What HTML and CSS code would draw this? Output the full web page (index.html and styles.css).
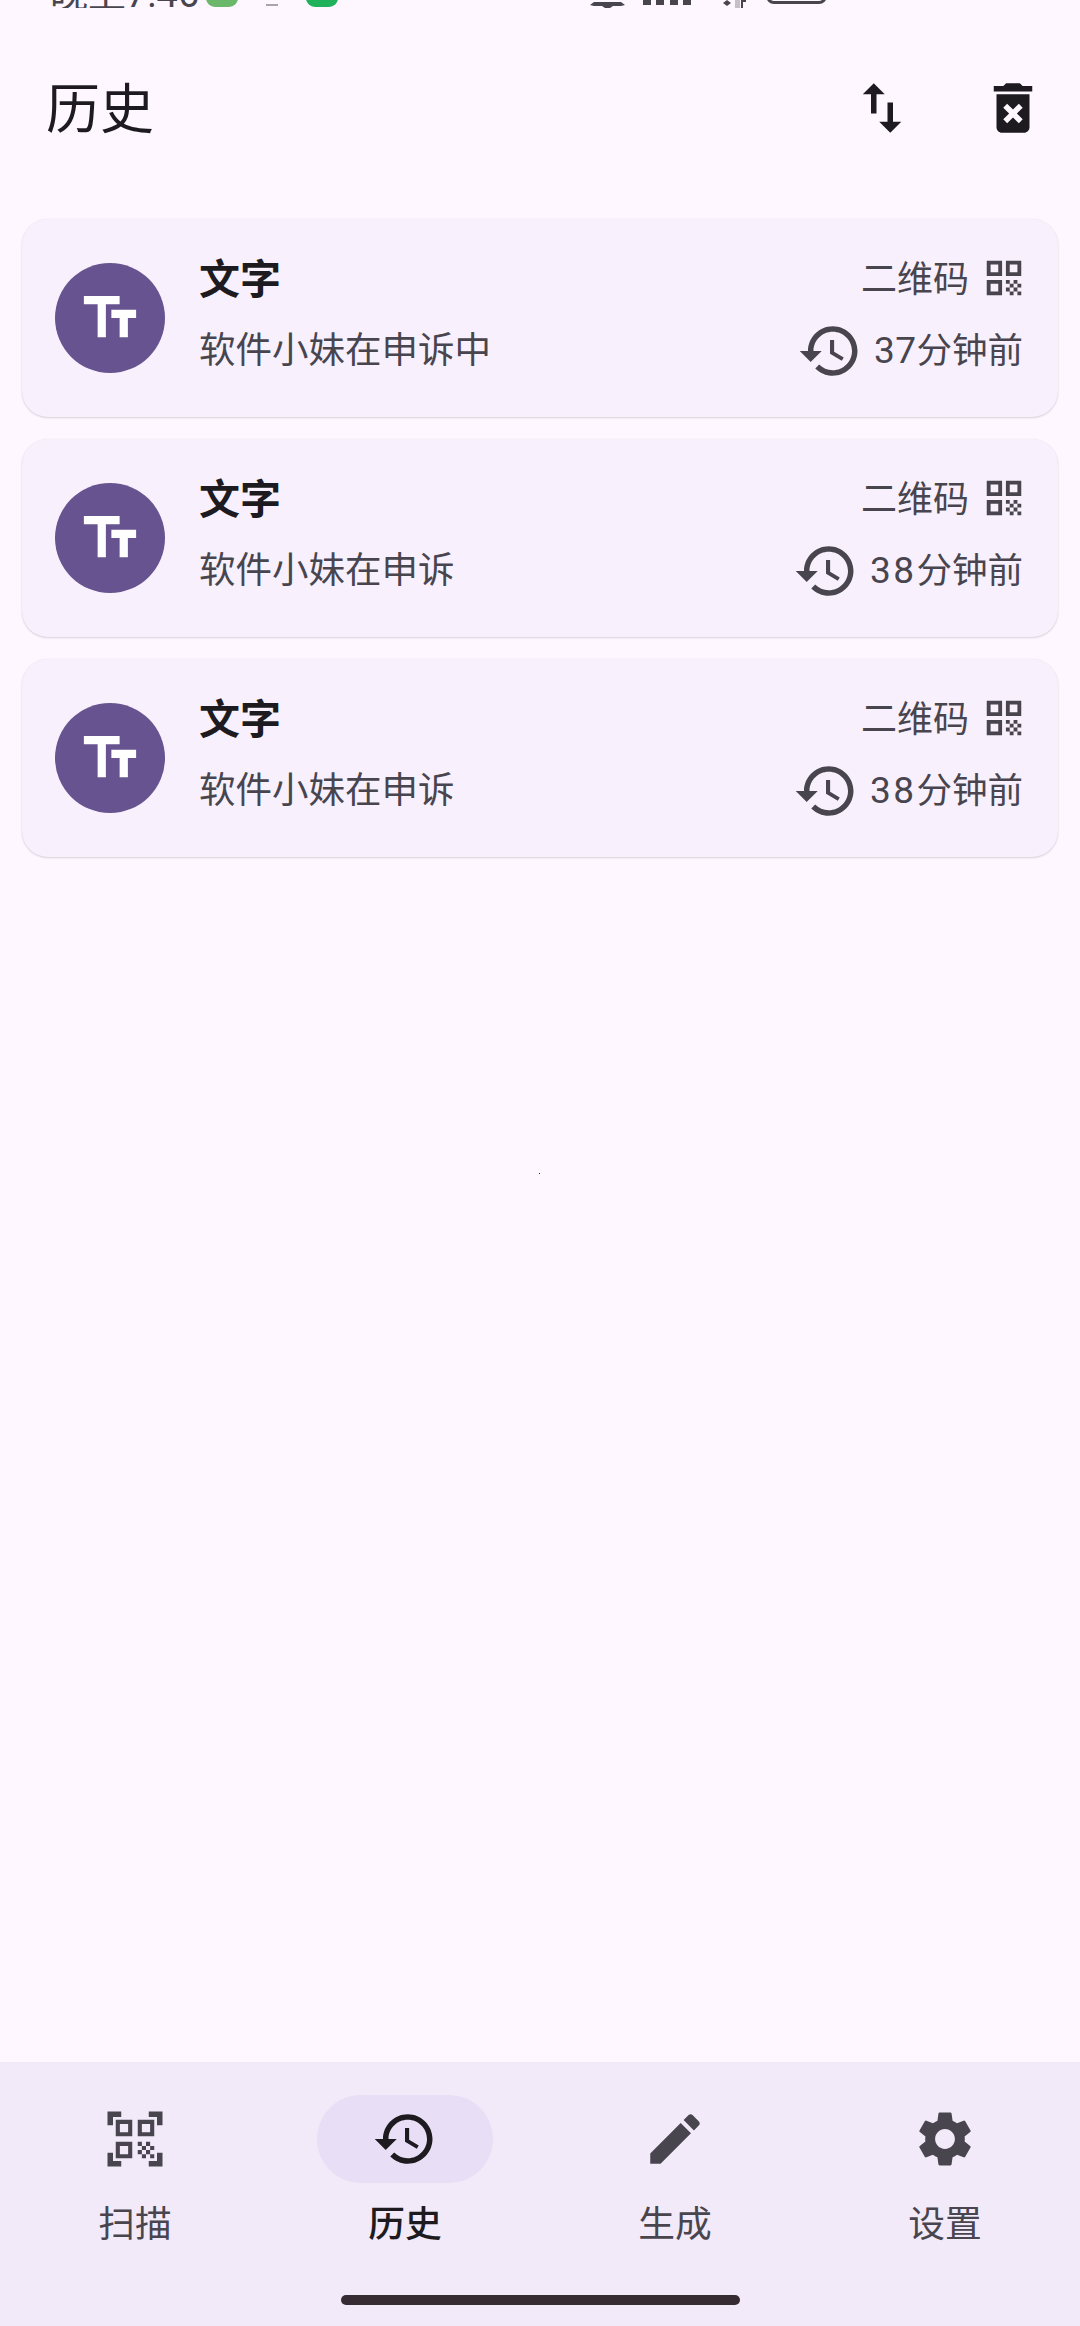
FILE: index.html
```html
<!DOCTYPE html>
<html lang="zh-CN">
<head>
<meta charset="utf-8">
<title>历史</title>
<link rel="stylesheet" href="styles.css">
</head>
<body>
<svg class="sprite" aria-hidden="true">
  <symbol id="i-history" viewBox="0 0 24 24"><path d="M13 3c-4.97 0-9 4.03-9 9H1l3.89 3.89.07.14L9 12H6c0-3.87 3.13-7 7-7s7 3.13 7 7-3.13 7-7 7c-1.93 0-3.68-.79-4.94-2.06l-1.42 1.42C8.27 19.99 10.51 21 13 21c4.97 0 9-4.03 9-9s-4.03-9-9-9zm-1 5v5l4.28 2.54.72-1.21-3.5-2.08V8H12z"/></symbol>
  <symbol id="i-qr" viewBox="0 0 24 24"><path d="M3 11h8V3H3v8zm2-6h4v4H5V5zM3 21h8v-8H3v8zm2-6h4v4H5v-4zM13 3v8h8V3h-8zm6 6h-4V5h4v4zM19 19h2v2h-2zM13 13h2v2h-2zM15 15h2v2h-2zM13 17h2v2h-2zM15 19h2v2h-2zM17 17h2v2h-2zM17 13h2v2h-2zM19 15h2v2h-2z"/></symbol>
  <symbol id="i-tt" viewBox="0 0 24 24"><path d="M2.5 4v3h5v12h3V7h5V4h-13zm19 5h-9v3h3v7h3v-7h3V9z"/></symbol>
</svg>

<div class="status">
  <span class="time">晚上7:46</span>
  <span class="badge badge-light"></span>
  <span class="dash"></span>
  <span class="badge badge-dark"></span>
  <span class="status-right">
    <svg class="st-bell" viewBox="0 0 35 8"><path d="M0 5 4 2h27l4 3-4 1H4zM12 6h11l-3 2h-5z"/></svg>
    <span class="bars"><i></i><i></i><i></i><i></i></span>
    <svg class="st-net" viewBox="0 0 25 8"><path d="M0 3 4 0l4 3-4 3z"/><path class="st-net-light" d="M12 0h5v8h-5z"/><path d="M18 0h5v2h-3v6h-2z"/></svg>
    <span class="battery"></span>
  </span>
</div>

<header class="appbar">
  <h1 class="title">历史</h1>
  <div class="actions">
    <svg class="icon-lg" viewBox="0 0 24 24"><path d="M16 17.01V10h-2v7.01h-3L15 21l4-3.99h-3zM9 3L5 6.99h3V14h2V6.99h3L9 3z"/></svg>
    <svg class="icon-lg" viewBox="0 0 24 24"><path d="M6 19c0 1.1.9 2 2 2h8c1.1 0 2-.9 2-2V7H6v12zm2.46-7.12l1.41-1.41L12 12.59l2.12-2.12 1.41 1.41L13.41 14l2.12 2.12-1.41 1.41L12 15.41l-2.12 2.12-1.41-1.41L10.59 14l-2.13-2.12zM15.5 4l-1-1h-5l-1 1H5v2h14V4z"/></svg>
  </div>
</header>

<main class="list">
  <article class="card">
    <div class="avatar"><svg class="avatar-icon"><use href="#i-tt"/></svg></div>
    <div class="body">
      <div class="row row-top"><span class="kind">文字</span><span class="meta"><span class="meta-label">二维码</span><svg class="icon-qr"><use href="#i-qr"/></svg></span></div>
      <div class="row row-bottom"><span class="content">软件小妹在申诉中</span><span class="meta"><svg class="icon-clock"><use href="#i-history"/></svg><span class="num">37</span>分钟前</span></div>
    </div>
  </article>
  <article class="card">
    <div class="avatar"><svg class="avatar-icon"><use href="#i-tt"/></svg></div>
    <div class="body">
      <div class="row row-top"><span class="kind">文字</span><span class="meta"><span class="meta-label">二维码</span><svg class="icon-qr"><use href="#i-qr"/></svg></span></div>
      <div class="row row-bottom"><span class="content">软件小妹在申诉</span><span class="meta"><svg class="icon-clock"><use href="#i-history"/></svg><span class="num num-wide">38</span>分钟前</span></div>
    </div>
  </article>
  <article class="card">
    <div class="avatar"><svg class="avatar-icon"><use href="#i-tt"/></svg></div>
    <div class="body">
      <div class="row row-top"><span class="kind">文字</span><span class="meta"><span class="meta-label">二维码</span><svg class="icon-qr"><use href="#i-qr"/></svg></span></div>
      <div class="row row-bottom"><span class="content">软件小妹在申诉</span><span class="meta"><svg class="icon-clock"><use href="#i-history"/></svg><span class="num num-wide">38</span>分钟前</span></div>
    </div>
  </article>
</main>

<span class="speck"></span>

<nav class="nav">
  <div class="tabs">
    <a class="tab">
      <span class="pill"><svg class="icon-lg" viewBox="0 0 24 24"><path d="M9.5 6.5v3h-3v-3h3M11 5H5v6h6V5zm-1.5 9.5v3h-3v-3h3M11 13H5v6h6v-6zm6.5-6.5v3h-3v-3h3M19 5h-6v6h6V5zm-6 8h1.5v1.5H13V13zm1.5 1.5H16V16h-1.5v-1.5zM16 13h1.5v1.5H16V13zm-3 3h1.5v1.5H13V16zm1.5 1.5H16V19h-1.5v-1.5zM16 16h1.5v1.5H16V16zm1.5-1.5H19V16h-1.5v-1.5zm0 3H19V19h-1.5v-1.5zM22 7h-2V4h-3V2h5v5zm0 15v-5h-2v3h-3v2h5zM2 22h5v-2H4v-3H2v5zM2 2v5h2V4h3V2H2z"/></svg></span>
      <span class="tab-label">扫描</span>
    </a>
    <a class="tab tab-active">
      <span class="pill"><svg class="icon-lg"><use href="#i-history"/></svg></span>
      <span class="tab-label">历史</span>
    </a>
    <a class="tab">
      <span class="pill"><svg class="icon-lg" viewBox="0 0 24 24"><path d="M3 17.25V21h3.75L17.81 9.94l-3.75-3.75L3 17.25zM20.71 7.04c.39-.39.39-1.02 0-1.41l-2.34-2.34c-.39-.39-1.02-.39-1.41 0l-1.83 1.83 3.75 3.75 1.83-1.83z"/></svg></span>
      <span class="tab-label">生成</span>
    </a>
    <a class="tab">
      <span class="pill"><svg class="icon-lg" viewBox="0 0 24 24"><path d="M19.14 12.94c.04-.3.06-.61.06-.94 0-.32-.02-.64-.07-.94l2.03-1.58c.18-.14.23-.41.12-.61l-1.92-3.32c-.12-.22-.37-.29-.59-.22l-2.39.96c-.5-.38-1.03-.7-1.62-.94L14.4 2.81c-.04-.24-.24-.41-.48-.41h-3.84c-.24 0-.43.17-.47.41L9.25 5.35c-.59.24-1.13.57-1.62.94l-2.39-.96c-.22-.08-.47 0-.59.22L2.74 8.87c-.12.21-.08.47.12.61l2.03 1.58c-.05.3-.09.63-.09.94s.02.64.07.94l-2.03 1.58c-.18.14-.23.41-.12.61l1.92 3.32c.12.22.37.29.59.22l2.39-.96c.5.38 1.03.7 1.62.94l.36 2.54c.05.24.24.41.48.41h3.84c.24 0 .44-.17.47-.41l.36-2.54c.59-.24 1.13-.56 1.62-.94l2.39.96c.22.08.47 0 .59-.22l1.92-3.32c.12-.22.07-.47-.12-.61l-2.01-1.58zM12 15.6c-1.98 0-3.6-1.62-3.6-3.6s1.62-3.6 3.6-3.6 3.6 1.62 3.6 3.6-1.62 3.6-3.6 3.6z"/></svg></span>
      <span class="tab-label">设置</span>
    </a>
  </div>
  <div class="home-bar"></div>
</nav>
</body>
</html>
```

FILE: styles.css
```css
* { box-sizing: border-box; }
html, body { margin: 0; padding: 0; }
body {
  position: relative;
  width: 1080px;
  height: 2326px;
  overflow: hidden;
  display: flex;
  flex-direction: column;
  background: #fff7ff;
  color: #1d1b20;
  font-family: Roboto, "Noto Sans CJK SC", sans-serif;
}
svg { fill: currentColor; display: block; flex: none; }
.sprite { position: absolute; width: 0; height: 0; }

/* status bar, cut off by the top of the picture */
.status {
  height: 8px;
  padding: 0 253px 0 50px;
  display: flex;
  align-items: flex-end;
  overflow: hidden;
  color: #49454f;
  flex: none;
}
.time { font-size: 38px; line-height: 38px; margin-bottom: -5px; white-space: nowrap; width: 143px; flex: none; }
.badge { width: 32px; height: 30px; border-radius: 9px; margin-bottom: 1px; flex: none; }
.badge-light { margin-left: 13px; background: #6bb86b; }
.badge-dark { margin-left: 28px; background: #1fb25a; }
.dash { width: 12px; height: 2px; margin: 0 0 2px 28px; background: #a9a5ad; flex: none; }
.status-right { margin-left: auto; display: flex; align-items: flex-start; align-self: flex-start; }
.st-bell { width: 35px; height: 8px; }
.bars { margin-left: 18px; width: 48px; height: 5px; display: flex; justify-content: space-between; }
.bars i { width: 8px; height: 5px; background: currentColor; }
.st-net { margin-left: 32px; width: 25px; height: 8px; }
.st-net-light { fill: #c5c0c8; }
.battery { margin: -30px 0 0 18px; width: 61px; height: 34px; border: 3px solid currentColor; border-radius: 8px; }

/* app bar */
.appbar {
  flex: none;
  height: 200px;
  padding: 0 34px 0 46px;
  display: flex;
  align-items: center;
  justify-content: space-between;
}
.title { margin: 5px 0 0; font-size: 54px; font-weight: 400; line-height: 66px; }
.actions { display: flex; gap: 65px; color: #1d1b20; }
.icon-lg { width: 66px; height: 66px; }

/* history cards */
.list { flex: none; padding: 11px 22px 0 22px; display: flex; flex-direction: column; gap: 22px; }
.card {
  height: 198px;
  padding: 0 35px 0 33px;
  display: flex;
  align-items: center;
  gap: 34px;
  background: #f8f1fd;
  border-radius: 26px;
  box-shadow: 0 1px 2px rgba(73, 60, 80, .2), 0 0 1px rgba(73, 60, 80, .1);
}
.avatar {
  flex: none;
  width: 110px;
  height: 110px;
  border-radius: 50%;
  background: #66538f;
  color: #fff;
  display: flex;
  align-items: center;
  justify-content: center;
}
.avatar-icon { width: 66px; height: 66px; }
.body { flex: 1; display: flex; flex-direction: column; gap: 15px; min-width: 0; }
.row { display: flex; justify-content: space-between; align-items: center; }
.row-top { height: 50px; }
.row-bottom { height: 66px; }
.kind { margin-top: 5px; font-size: 41px; font-weight: 700; line-height: 50px; color: #1d1b20; }
.content { font-size: 36.5px; line-height: 50px; color: #49454f; }
.meta { display: flex; align-items: center; font-size: 35.5px; line-height: 50px; color: #49454f; }
.meta-label { margin-top: 5px; font-size: 36px; }
.num { font-size: 37px; letter-spacing: .5px; }
.num-wide { letter-spacing: 2.5px; }
.icon-qr { width: 46px; height: 46px; margin-left: 12px; margin-right: -4px; }
.icon-clock { width: 66px; height: 66px; margin-right: 11px; }

.speck { position: absolute; left: 539px; top: 1173px; width: 1px; height: 1px; background: #222; }

/* bottom navigation */
.nav {
  margin-top: auto;
  flex: none;
  height: 264px;
  background: #f2eaf8;
  padding-top: 33px;
  display: flex;
  flex-direction: column;
  align-items: center;
}
.tabs { width: 100%; display: grid; grid-template-columns: repeat(4, 1fr); }
.tab { display: flex; flex-direction: column; align-items: center; color: #49454f; }
.pill { width: 176px; height: 88px; border-radius: 44px; display: flex; align-items: center; justify-content: center; }
.tab-label { margin-top: 17px; font-size: 36.75px; line-height: 50px; }
.tab-active { color: #1d1b20; }
.tab-active .pill { background: #e8def5; }
.tab-active .tab-label { font-weight: 500; }
.home-bar { margin-top: 45px; width: 399px; height: 10px; border-radius: 5px; background: #372b33; }
```
